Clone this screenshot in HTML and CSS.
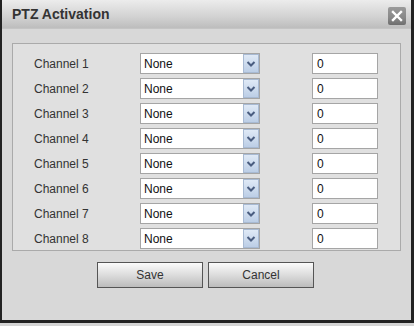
FILE: index.html
```html
<!DOCTYPE html>
<html lang="en">
<head>
    <meta charset="UTF-8">
    <title>PTZ Activation</title>
    <link rel="stylesheet" href="styles.css">
</head>
<body>
    <div class="dialog">
        <div class="title-bar">
            <span class="title">PTZ Activation</span>
            <span class="close-btn">
                <svg width="12" height="12" viewBox="0 0 12 12"><path d="M2 2 L10 10 M10 2 L2 10" stroke="#fff" stroke-width="2.4" stroke-linecap="square"/></svg>
            </span>
        </div>
        <div class="content">
            <div class="group" id="channelList"></div>
            <div class="buttons">
                <button class="btn">Save</button>
                <button class="btn">Cancel</button>
            </div>
        </div>
    </div>

    <script>
        const list = document.getElementById('channelList');
        for (let i = 1; i <= 8; i++) {
            list.innerHTML += `
                <div class="row">
                    <span class="label">Channel ${i}</span>
                    <div class="select">
                        <span class="select-text">None</span>
                        <span class="select-arrow">
                            <svg width="10" height="8" viewBox="0 0 10 8"><path d="M1.5 2 L5 5.5 L8.5 2" fill="none" stroke="#4a5d80" stroke-width="2"/></svg>
                        </span>
                    </div>
                    <input type="text" class="num" value="0">
                </div>`;
        }
    </script>
</body>
</html>
```

FILE: styles.css
```css
body {
    margin: 0;
    background-color: #d4d4d4;
    font-family: Arial, 'Liberation Sans', sans-serif;
    font-size: 12px;
    color: #333;
}
.dialog {
    width: 409px;
    height: 320px;
    border-left: 2px solid #222;
    border-right: 3px solid #222;
    border-bottom: 3px solid #222;
    background-color: #d8d8d8;
}
.title-bar {
    height: 29px;
    background: linear-gradient(#ececec, #d2d2d2 60%, #bdbdbd);
    border-bottom: 1px solid #c4c4c4;
    box-sizing: border-box;
    display: flex;
    align-items: center;
    justify-content: space-between;
    padding: 0 5px 0 10px;
}
.title {
    font-size: 14px;
    font-weight: bold;
    color: #333;
}
.close-btn {
    width: 18px;
    height: 18px;
    margin-top: 3px;
    border-radius: 2px;
    background: linear-gradient(#9a9a9a, #888 60%, #6e6e6e);
    display: flex;
    align-items: center;
    justify-content: center;
}
.content {
    padding: 14px 10px 0 10px;
}
.group {
    border: 1px solid #aaa;
    background-color: #e0e0e0;
    height: 208px;
    padding-top: 9px;
    box-sizing: border-box;
    display: flex;
    flex-direction: column;
    gap: 4px;
}
.row {
    display: flex;
    align-items: center;
    height: 21px;
}
.label {
    width: 106px;
    padding-left: 21px;
    font-size: 12px;
    color: #333;
}
.select {
    width: 120px;
    height: 21px;
    box-sizing: border-box;
    border: 1px solid #a5a5a5;
    background-color: #fff;
    display: flex;
    align-items: center;
    justify-content: space-between;
}
.select-text {
    padding-left: 3px;
    font-size: 12px;
    color: #111;
}
.select-arrow {
    width: 16px;
    height: 19px;
    box-sizing: border-box;
    border: 1px solid #a8bad3;
    background: linear-gradient(#dfe9f6, #bccee6);
    display: flex;
    align-items: center;
    justify-content: center;
}
.num {
    margin-left: 52px;
    width: 66px;
    height: 21px;
    box-sizing: border-box;
    border: 1px solid #a5a5a5;
    padding: 0 4px;
    font-family: Arial, 'Liberation Sans', sans-serif;
    font-size: 12px;
    color: #111;
}
.buttons {
    display: flex;
    justify-content: center;
    gap: 5px;
    margin-top: 11px;
    padding-right: 2px;
}
.btn {
    width: 106px;
    height: 26px;
    border: 1px solid #555;
    background: linear-gradient(#fbfbfb, #dcdcdc 50%, #bcbcbc);
    font-family: Arial, 'Liberation Sans', sans-serif;
    font-size: 12px;
    color: #333;
}
```
